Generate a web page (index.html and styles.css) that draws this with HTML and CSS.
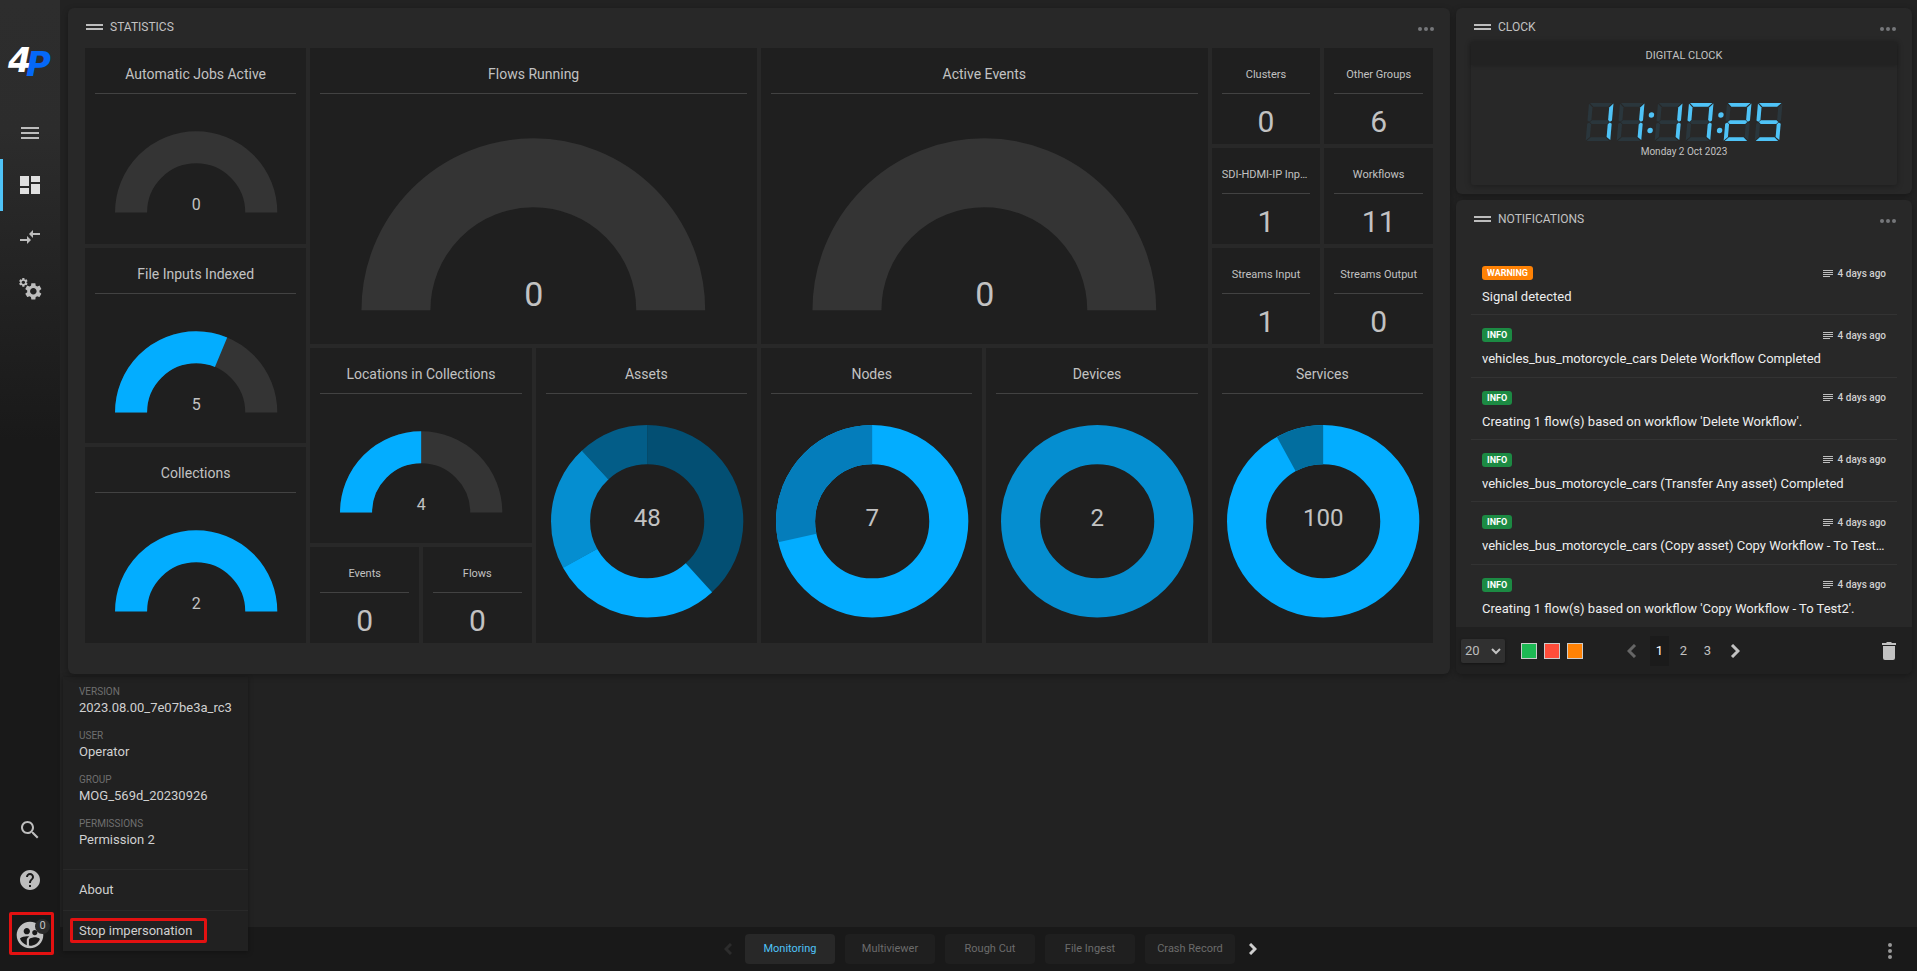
FILE: index.html
```html
<!DOCTYPE html>
<html lang="en">
<head>
<meta charset="utf-8">
<title>Monitoring dashboard</title>
<link rel="stylesheet" href="styles.css">
</head>
<body>
<svg class="defs" aria-hidden="true">
  <defs>
    <path id="sa" d="M3 0H25.500L21.500 3.800H6.800Z"/>
    <path id="sb" d="M26.500 .5V17.500L24.500 18.800L22.600 17V4.500Z"/>
    <path id="sc" d="M24.500 19.400L26.500 20.800V37L22.600 34V21.200Z"/>
    <path id="sd" d="M3 38H25.500L21.500 34.200H6.800Z"/>
    <path id="se" d="M2 20.800L4 19.400L5.900 21.200V34L2 37.500Z"/>
    <path id="sf" d="M2 .5L5.900 4.500V17L4 18.800L2 17.500Z"/>
    <path id="sg" d="M6.500 17.200H22L24 19.100L22 21H6.500L4.500 19.100Z"/>
    <g id="ghost"><use href="#sa"/><use href="#sb"/><use href="#sc"/><use href="#sd"/><use href="#se"/><use href="#sf"/><use href="#sg"/></g>
    <path id="gear" d="M19.430 12.980c.04-.32.07-.64.07-.98s-.03-.66-.07-.98l2.110-1.650c.19-.15.24-.42.12-.64l-2-3.460c-.12-.22-.39-.3-.61-.22l-2.490 1c-.52-.4-1.080-.73-1.690-.98l-.38-2.650C14.460 2.180 14.250 2 14 2h-4c-.25 0-.46.18-.49.42l-.38 2.650c-.61.25-1.170.59-1.690.98l-2.490-1c-.23-.09-.49 0-.61.22l-2 3.460c-.13.22-.07.49.12.64l2.110 1.650c-.04.32-.07.65-.07.98s.03.66.07.98l-2.110 1.650c-.19.15-.24.42-.12.64l2 3.460c.12.22.39.3.61.22l2.490-1c.52.4 1.080.73 1.690.98l.38 2.650c.03.24.24.42.49.42h4c.25 0 .46-.18.49-.42l.38-2.650c.61-.25 1.170-.59 1.690-.98l2.490 1c.23.09.49 0 .61-.22l2-3.460c.12-.22.07-.49-.12-.64l-2.110-1.650zM12 16c-2.210 0-4-1.790-4-4s1.790-4 4-4 4 1.790 4 4-1.790 4-4 4z"/>
    <path id="lines" d="M0 .5H10M0 2.500H10M0 4.500H10M0 6.500H7"/>
  </defs>
</svg>
<div class="app">
  <nav class="sidebar" aria-label="Main">
    <svg class="logo" viewBox="0 0 46 32" role="img" aria-label="4P">
      <text class="logo-four" x="1" y="27">4</text><text class="logo-p" x="19" y="31">P</text>
    </svg>
    <button class="nav-item" aria-label="Menu"><svg width="20" height="14"><path class="line" d="M1 2H19M1 7H19M1 12H19"/></svg></button>
    <button class="nav-item active" aria-label="Dashboard"><svg width="20" height="18"><path d="M0 0H9V10H0ZM0 12H9V18H0ZM11 0H20V6H11ZM11 8H20V18H11Z"/></svg></button>
    <button class="nav-item" aria-label="Transfers"><svg width="24" height="24" viewBox="0 0 24 24"><path d="M9.010 14H2v2h7.010v3L13 15l-3.990-4v3zm5.980-1v-3H22V8h-7.010V5L11 9l3.990 4z"/></svg></button>
    <button class="nav-item" aria-label="Settings"><svg width="24" height="24" viewBox="0 0 24 24"><use href="#gear" transform="translate(5.500 4.500) scale(.82)"/><use href="#gear" transform="translate(.2 .2) scale(.43)"/></svg></button>
    <div class="sidebar-foot">
      <button class="nav-item" aria-label="Search"><svg width="24" height="24" viewBox="0 0 24 24"><path d="M15.500 14h-.79l-.28-.27C15.410 12.590 16 11.110 16 9.500 16 5.910 13.090 3 9.500 3S3 5.910 3 9.500 5.910 16 9.500 16c1.610 0 3.090-.59 4.230-1.570l.27.28v.79l5 4.990L20.490 19l-4.990-5zm-6 0C7.010 14 5 11.990 5 9.500S7.010 5 9.500 5 14 7.010 14 9.500 11.990 14 9.500 14z"/></svg></button>
      <button class="nav-item" aria-label="Help"><svg width="24" height="24" viewBox="0 0 24 24"><path d="M12 2C6.480 2 2 6.480 2 12s4.480 10 10 10 10-4.480 10-10S17.520 2 12 2zm1 17h-2v-2h2v2zm2.070-7.750l-.9.920C13.450 12.900 13 13.500 13 15h-2v-.5c0-1.100.45-2.100 1.170-2.830l1.240-1.260c.37-.36.59-.86.59-1.410 0-1.100-.9-2-2-2s-2 .9-2 2H8c0-2.210 1.790-4 4-4s4 1.790 4 4c0 .88-.36 1.680-.93 2.250z"/></svg></button>
      <button class="profile" aria-label="Profile">
        <svg width="32" height="32" viewBox="0 0 24 24"><path d="M11.990 2c-5.520 0-10 4.480-10 10s4.480 10 10 10 10-4.480 10-10-4.480-10-10-10zm3.610 6.340c1.070 0 1.930.86 1.930 1.930 0 1.070-.86 1.930-1.930 1.930-1.070 0-1.930-.86-1.930-1.930-.01-1.070.86-1.930 1.930-1.930zm-6-1.580c1.300 0 2.360 1.060 2.360 2.360 0 1.300-1.060 2.360-2.360 2.360s-2.360-1.060-2.360-2.360c0-1.310 1.050-2.360 2.360-2.360zm0 9.130v3.750c-2.400-.75-4.300-2.600-5.140-4.960 1.050-1.120 3.670-1.690 5.140-1.690.53 0 1.200.08 1.900.22-1.640.87-1.900 2.020-1.900 2.680zM11.990 20c-.27 0-.53-.01-.79-.04v-4.070c0-1.420 2.940-2.130 4.400-2.130 1.070 0 2.920.39 3.840 1.150-1.170 2.970-4.060 5.090-7.450 5.090z"/></svg>
        <span class="count">0</span>
      </button>
    </div>
  </nav>

  <div class="content">
    <main class="dashboard">
      <section class="panel stats">
        <header class="panel-head"><span class="grip"></span><h2>STATISTICS</h2><button class="dots" aria-label="Statistics options"><i></i><i></i><i></i></button></header>
        <div class="tiles">
          <article class="tile medium c1 r1"><h3>Automatic Jobs Active</h3>
            <svg class="chart" viewBox="0 0 201 149"><path class="track" d="M36 118A65 65 0 0 1 166 118"/><text x="101" y="116">0</text></svg></article>
          <article class="tile medium c1 r3"><h3>File Inputs Indexed</h3>
            <svg class="chart" viewBox="0 0 201 149"><path class="track" d="M36 118A65 65 0 0 1 166 118"/><path class="fill" pathLength="1000" stroke-dasharray="625 2000" d="M36 118A65 65 0 0 1 166 118"/><text x="101" y="116">5</text></svg></article>
          <article class="tile medium c1 r5"><h3>Collections</h3>
            <svg class="chart" viewBox="0 0 201 149"><path class="fill" d="M36 118A65 65 0 0 1 166 118"/><text x="101" y="116">2</text></svg></article>
          <article class="tile large c3 r1"><h3>Flows Running</h3>
            <svg class="chart big" viewBox="0 0 427 249"><path class="track" d="M76 216A137.500 137.500 0 0 1 351 216"/><text x="214" y="212">0</text></svg></article>
          <article class="tile large c7 r1"><h3>Active Events</h3>
            <svg class="chart big" viewBox="0 0 427 249"><path class="track" d="M76 216A137.500 137.500 0 0 1 351 216"/><text x="214" y="212">0</text></svg></article>
          <article class="tile medium c3 r4"><h3>Locations in Collections</h3>
            <svg class="chart" viewBox="0 0 201 149"><path class="track" d="M36 118A65 65 0 0 1 166 118"/><path class="fill" d="M36 118A65 65 0 0 1 101 53"/><text x="101" y="116">4</text></svg></article>
          <article class="tile tall c5 r4"><h3>Assets</h3>
            <svg class="chart donut" viewBox="0 0 201 249"><g transform="rotate(-90 101 127)"><circle class="s5" cx="101" cy="127" r="76.500" pathLength="1000" stroke-dasharray="383 3000"/><circle class="s1" cx="101" cy="127" r="76.500" pathLength="1000" stroke-dasharray="288 3000" stroke-dashoffset="-382"/><circle class="s2" cx="101" cy="127" r="76.500" pathLength="1000" stroke-dasharray="213 3000" stroke-dashoffset="-669"/><circle class="s4" cx="101" cy="127" r="76.500" pathLength="1000" stroke-dasharray="119 3000" stroke-dashoffset="-881"/></g><text x="101" y="132">48</text></svg></article>
          <article class="tile tall c7 r4"><h3>Nodes</h3>
            <svg class="chart donut" viewBox="0 0 201 249"><g transform="rotate(-90 101 127)"><circle class="s1" cx="101" cy="127" r="76.500"/><circle class="s3" cx="101" cy="127" r="76.500" pathLength="1000" stroke-dasharray="285 3000" stroke-dashoffset="-715"/></g><text x="101" y="132">7</text></svg></article>
          <article class="tile tall c9 r4"><h3>Devices</h3>
            <svg class="chart donut" viewBox="0 0 201 249"><circle class="s2" cx="101" cy="127" r="76.500"/><text x="101" y="132">2</text></svg></article>
          <article class="tile tall c11 r4"><h3>Services</h3>
            <svg class="chart donut" viewBox="0 0 201 249"><g transform="rotate(-90 101 127)"><circle class="s1" cx="101" cy="127" r="76.500"/><circle class="s6" cx="101" cy="127" r="76.500" pathLength="1000" stroke-dasharray="80 3000" stroke-dashoffset="-920"/></g><text x="101" y="132">100</text></svg></article>
          <article class="tile small c11 r1"><h3>Clusters</h3><p>0</p></article>
          <article class="tile small c12 r1"><h3>Other Groups</h3><p>6</p></article>
          <article class="tile small c11 r2"><h3>SDI-HDMI-IP Inputs</h3><p>1</p></article>
          <article class="tile small c12 r2"><h3>Workflows</h3><p>11</p></article>
          <article class="tile small c11 r3"><h3>Streams Input</h3><p>1</p></article>
          <article class="tile small c12 r3"><h3>Streams Output</h3><p>0</p></article>
          <article class="tile small c3 r6"><h3>Events</h3><p>0</p></article>
          <article class="tile small c4 r6"><h3>Flows</h3><p>0</p></article>
        </div>
      </section>

      <div class="side">
        <section class="panel clock">
          <header class="panel-head"><span class="grip"></span><h2>CLOCK</h2><button class="dots" aria-label="Clock options"><i></i><i></i><i></i></button></header>
          <div class="clock-card">
            <h3>DIGITAL CLOCK</h3>
            <div class="clock-face">
              <svg width="200" height="38" viewBox="0 0 200 38" role="img" aria-label="11:17:25">
                <g transform="translate(3) skewX(-5)">
                  <g><use class="off" href="#ghost"/><g class="on"><use href="#sb"/><use href="#sc"/></g></g>
                  <g transform="translate(31)"><use class="off" href="#ghost"/><g class="on"><use href="#sb"/><use href="#sc"/></g></g>
                  <g class="on"><circle cx="65.500" cy="12" r="2.700"/><circle cx="65.500" cy="27.500" r="2.700"/></g>
                  <g transform="translate(69)"><use class="off" href="#ghost"/><g class="on"><use href="#sb"/><use href="#sc"/></g></g>
                  <g transform="translate(100)"><use class="off" href="#ghost"/><g class="on"><use href="#sa"/><use href="#sf"/><use href="#sb"/><use href="#sc"/></g></g>
                  <g class="on"><circle cx="135" cy="12" r="2.700"/><circle cx="135" cy="27.500" r="2.700"/></g>
                  <g transform="translate(138)"><use class="off" href="#ghost"/><g class="on"><use href="#sa"/><use href="#sb"/><use href="#sg"/><use href="#se"/><use href="#sd"/></g></g>
                  <g transform="translate(169)"><use class="off" href="#ghost"/><g class="on"><use href="#sa"/><use href="#sf"/><use href="#sg"/><use href="#sc"/><use href="#sd"/></g></g>
                </g>
              </svg>
              <p>Monday 2 Oct 2023</p>
            </div>
          </div>
        </section>

        <section class="panel notifications">
          <header class="panel-head"><span class="grip"></span><h2>NOTIFICATIONS</h2><button class="dots" aria-label="Notification options"><i></i><i></i><i></i></button></header>
          <ul class="notes">
            <li><div class="meta"><span class="badge warning">WARNING</span><span class="when"><svg width="10" height="7"><use href="#lines"/></svg>4 days ago</span></div><p>Signal detected</p></li>
            <li><div class="meta"><span class="badge">INFO</span><span class="when"><svg width="10" height="7"><use href="#lines"/></svg>4 days ago</span></div><p>vehicles_bus_motorcycle_cars Delete Workflow Completed</p></li>
            <li><div class="meta"><span class="badge">INFO</span><span class="when"><svg width="10" height="7"><use href="#lines"/></svg>4 days ago</span></div><p>Creating 1 flow(s) based on workflow 'Delete Workflow'.</p></li>
            <li><div class="meta"><span class="badge">INFO</span><span class="when"><svg width="10" height="7"><use href="#lines"/></svg>4 days ago</span></div><p>vehicles_bus_motorcycle_cars (Transfer Any asset) Completed</p></li>
            <li><div class="meta"><span class="badge">INFO</span><span class="when"><svg width="10" height="7"><use href="#lines"/></svg>4 days ago</span></div><p>vehicles_bus_motorcycle_cars (Copy asset) Copy Workflow - To Test2 Completed</p></li>
            <li><div class="meta"><span class="badge">INFO</span><span class="when"><svg width="10" height="7"><use href="#lines"/></svg>4 days ago</span></div><p>Creating 1 flow(s) based on workflow 'Copy Workflow - To Test2'.</p></li>
          </ul>
          <footer class="notes-foot">
            <div class="size"><select aria-label="Items per page"><option>20</option></select><svg width="10" height="7"><path class="line" d="M1 1L5 5L9 1"/></svg></div>
            <div class="filters"><button class="green" aria-label="Info"></button><button class="red" aria-label="Error"></button><button class="orange" aria-label="Warning"></button></div>
            <div class="pager">
              <button class="prev" aria-label="Previous page" disabled><svg width="10" height="14"><path class="chev" d="M8 1L2 7L8 13"/></svg></button>
              <button class="page current">1</button><button class="page">2</button><button class="page">3</button>
              <button class="next" aria-label="Next page"><svg width="10" height="14"><path class="chev" d="M2 1L8 7L2 13"/></svg></button>
            </div>
            <button class="trash" aria-label="Delete all"><svg width="14" height="18"><path d="M1 4H13V16Q13 18 11 18H3Q1 18 1 16ZM0 1H4L5 0H9L10 1H14V3H0Z"/></svg></button>
          </footer>
        </section>
      </div>
    </main>

    <footer class="tabbar">
      <div class="tabs">
        <button class="arrow dim" aria-label="Previous tabs" disabled><svg width="8" height="12"><path class="chev" d="M7 1L2 6L7 11"/></svg></button>
        <button class="tab selected">Monitoring</button>
        <button class="tab">Multiviewer</button>
        <button class="tab">Rough Cut</button>
        <button class="tab">File Ingest</button>
        <button class="tab">Crash Record</button>
        <button class="arrow" aria-label="Next tabs"><svg width="8" height="12"><path class="chev" d="M1 1L6 6L1 11"/></svg></button>
      </div>
      <button class="kebab" aria-label="More"><i></i><i></i><i></i></button>
    </footer>
  </div>

  <aside class="user-menu">
    <dl>
      <div><dt>VERSION</dt><dd>2023.08.00_7e07be3a_rc3</dd></div>
      <div><dt>USER</dt><dd>Operator</dd></div>
      <div><dt>GROUP</dt><dd>MOG_569d_20230926</dd></div>
      <div><dt>PERMISSIONS</dt><dd>Permission 2</dd></div>
    </dl>
    <button class="menu-item"><span>About</span></button>
    <button class="menu-item marked"><span>Stop impersonation</span></button>
  </aside>
</div>
</body>
</html>
```
FILE: styles.css
```css
* { box-sizing: border-box; }
body, h2, h3, p, ul, dl, dd { margin: 0; padding: 0; }
body { background: #222; color: #c2c2c2; font-family: Roboto, "Liberation Sans", sans-serif; font-size: 13px; }
button { background: none; border: 0; padding: 0; margin: 0; color: inherit; font: inherit; cursor: pointer; }
svg { display: block; fill: currentColor; }
.defs { position: absolute; width: 0; height: 0; }
.line, .chev { fill: none; stroke: currentColor; stroke-width: 2; }
.chev { stroke-width: 3; }

.app { position: relative; display: flex; min-height: 100vh; }

/* Sidebar */
.sidebar { width: 60px; flex: none; display: flex; flex-direction: column; padding: 45px 0 16px; background: linear-gradient(#2d2d2d, #2c2c2c 130px, #191919 440px); }
.logo { width: 46px; height: 32px; margin: 0 0 30px 7px; overflow: visible; font-family: "DejaVu Sans", sans-serif; font-weight: 700; font-style: italic; font-size: 34px; }
.logo-four { fill: #fff; }
.logo-p { fill: #0568f8; }
.nav-item { height: 52px; width: 100%; display: grid; place-items: center; color: #bdbdbd; border-left: 3px solid transparent; border-right: 3px solid transparent; }
.nav-item.active { color: #e0e0e0; border-left-color: #4fc3f7; }
.sidebar-foot { margin-top: auto; display: flex; flex-direction: column; }
.sidebar-foot .nav-item { height: 50px; }
.profile { position: relative; width: 45px; height: 43px; margin: 7px 0 0 9px; border: 3px solid #e31111; border-radius: 2px; display: grid; place-items: center; padding-top: 2px; }
.profile svg { margin-left: -3px; }
.count { position: absolute; top: 4px; right: 1px; width: 15px; height: 15px; border-radius: 50%; background: #2a2a2a; font-size: 11px; line-height: 14px; text-align: center; }

/* Content */
.content { flex: 1; min-width: 0; display: flex; flex-direction: column; }
.dashboard { flex: 1; display: grid; grid-template-columns: minmax(0, 1382fr) minmax(0, 456fr); gap: 6px; align-items: start; padding: 8px 5px 0 8px; }
.side { display: grid; gap: 6px; }
.panel { background: #282828; border-radius: 6px; box-shadow: 0 2px 6px rgba(0, 0, 0, .3); position: relative; z-index: 2; }
.panel-head { height: 40px; display: flex; align-items: center; padding: 0 18px 2px; }
.panel-head h2 { font-size: 12px; font-weight: 400; line-height: 16px; flex: 1; margin-left: 7px; }
.grip { width: 17px; height: 6px; border: solid #bdbdbd; border-width: 2px 0; }
.dots { display: flex; gap: 2px; padding-top: 4px; margin-right: -2px; }
.dots i, .kebab i { width: 4px; height: 4px; border-radius: 50%; background: #75777a; }

/* Statistics */
.stats { padding-bottom: 31px; }
.tiles { display: grid; grid-template-columns: repeat(12, minmax(0, 1fr)); grid-template-rows: repeat(6, minmax(0, 1fr)); min-height: 595px; gap: 4px; padding: 0 17px; }
.tile { background: #1f1f1f; padding: 0 10px; display: flex; flex-direction: column; min-width: 0; }
.tile h3 { height: 46px; flex: none; padding-top: 6px; border-bottom: 1px solid #424242; font-size: 14px; font-weight: 400; line-height: 40px; text-align: center; white-space: nowrap; overflow: hidden; text-overflow: ellipsis; }
.tile.small h3 { font-size: 11px; padding-top: 7px; }
.tile p { font-size: 30px; line-height: 42px; padding-top: 7px; text-align: center; height: 0; }
.medium { grid-column-end: span 2; grid-row-end: span 2; }
.large { grid-column-end: span 4; grid-row-end: span 3; }
.tall { grid-column-end: span 2; grid-row-end: span 3; }
.c1 { grid-column-start: 1; } .c3 { grid-column-start: 3; } .c4 { grid-column-start: 4; } .c5 { grid-column-start: 5; }
.c7 { grid-column-start: 7; } .c9 { grid-column-start: 9; } .c11 { grid-column-start: 11; } .c12 { grid-column-start: 12; }
.r1 { grid-row-start: 1; } .r2 { grid-row-start: 2; } .r3 { grid-row-start: 3; } .r4 { grid-row-start: 4; } .r5 { grid-row-start: 5; } .r6 { grid-row-start: 6; }
.chart { flex: 1 1 0; height: 0; min-height: 0; width: 100%; font-size: 16px; text-anchor: middle; }
.chart path { fill: none; stroke-width: 32; }
.chart.big { font-size: 34px; }
.chart.big path { stroke-width: 69; }
.chart .track { stroke: #343434; }
.chart .fill { stroke: #03adff; }
.chart.donut { font-size: 24px; }
.donut circle { fill: none; stroke-width: 39; }
.s1 { stroke: #03adff; } .s2 { stroke: #058ed0; } .s3 { stroke: #047dbb; }
.s4 { stroke: #035d88; } .s5 { stroke: #034f73; } .s6 { stroke: #026e9f; }

/* Clock */
.clock { padding-bottom: 9px; }
.clock-card { margin: -6px 15px 0; box-shadow: 0 1px 6px rgba(0, 0, 0, .3); border-radius: 3px; }
.clock-card h3 { background: #222; font-size: 11px; font-weight: 400; line-height: 18px; padding-top: 5px; text-align: center; box-shadow: 0 1px 4px rgba(0, 0, 0, .2); }
.clock-face { height: 120px; display: flex; flex-direction: column; align-items: center; padding-top: 38px; }
.clock-face p { font-size: 10px; line-height: 20px; padding-top: 1px; }
.on { fill: #4fc3f7; }
.off { fill: #2a363c; }

/* Notifications */
.notifications { min-height: 474px; display: flex; flex-direction: column; }
.notes { list-style: none; flex: 1; display: grid; grid-auto-rows: 1fr; margin: 13px 15px 0; }
.notes li { padding: 13px 11px 0; border-bottom: 1px solid #333; min-width: 0; }
.notes li:last-child { border-bottom: 0; }
.notes p { font-size: 13px; font-weight: 400; line-height: 18px; color: #eee; margin-top: 8px; white-space: nowrap; overflow: hidden; text-overflow: ellipsis; }
.meta { display: flex; justify-content: space-between; align-items: center; height: 14px; }
.badge { background: #1c8a43; color: #fff; font-size: 9px; font-weight: 700; line-height: 14px; padding: 0 5px; border-radius: 3px; }
.badge.warning { background: #ff8205; }
.when { display: flex; align-items: center; gap: 5px; font-size: 10px; font-weight: 500; color: #d0d0d0; }
.when svg { fill: none; stroke: #bdbdbd; stroke-width: 1; }
.notes-foot { height: 47px; background: #202020; border-radius: 0 0 6px 6px; display: flex; align-items: center; padding: 0 16px 0 5px; }
.size { position: relative; width: 44px; height: 24px; }
.size select { appearance: none; width: 100%; height: 100%; border: 0; border-radius: 2px; background: #303030; color: #bdbdbd; font: 13px Roboto, sans-serif; padding: 0 4px; box-shadow: 0 1px 3px rgba(0, 0, 0, .4); }
.size svg { position: absolute; right: 4px; top: 9px; }
.filters { display: flex; gap: 7px; margin-left: 16px; }
.filters button { width: 16px; height: 16px; border: 1px solid #ccc; }
.green { background: #1db954; } .red { background: #ff4d3a; } .orange { background: #ff8205; }
.pager { display: flex; align-items: center; gap: 5px; margin-left: 44px; flex: 1; }
.page { width: 19px; height: 30px; font-size: 13px; }
.page.current { background: #1b1b1b; color: #fff; }
.prev { margin-right: 8px; color: #666; }
.next { margin-left: 8px; }

/* Tab bar */
.tabbar { height: 44px; background: #191919; display: flex; align-items: center; padding: 0 25px 0 32px; }
.tabs { flex: 1; display: flex; justify-content: center; align-items: center; gap: 10px; }
.tab { width: 90px; height: 30px; border-radius: 4px; background: #1f1f1f; color: #6b6b6b; font-size: 11px; padding-bottom: 2px; }
.tab.selected { background: #282828; color: #4fc3f7; }
.arrow { width: 15px; display: grid; place-items: center; color: #cfcfcf; }
.arrow.dim { color: #2c2c2c; }
.kebab { display: flex; flex-direction: column; gap: 2px; padding-top: 4px; }
.kebab i { background: #999; }

/* User menu */
.user-menu { position: absolute; left: 63px; bottom: 20px; width: 185px; background: #212121; box-shadow: 0 1px 5px rgba(0, 0, 0, .35); z-index: 1; }
.user-menu dl { padding: 8px 16px 20px; display: grid; gap: 12px; }
.user-menu dt { font-size: 10px; line-height: 14px; color: #6f6f6f; }
.user-menu dd { font-size: 13px; line-height: 18px; color: #d0d0d0; }
.menu-item { display: flex; align-items: center; width: 100%; height: 41px; padding: 0 7px 2px; border-top: 1px solid #292929; color: #d0d0d0; }
.menu-item span { border: 3px solid transparent; border-radius: 2px; padding: 0 12px 0 6px; line-height: 19px; }
.menu-item.marked span { border-color: #e31111; }
```
